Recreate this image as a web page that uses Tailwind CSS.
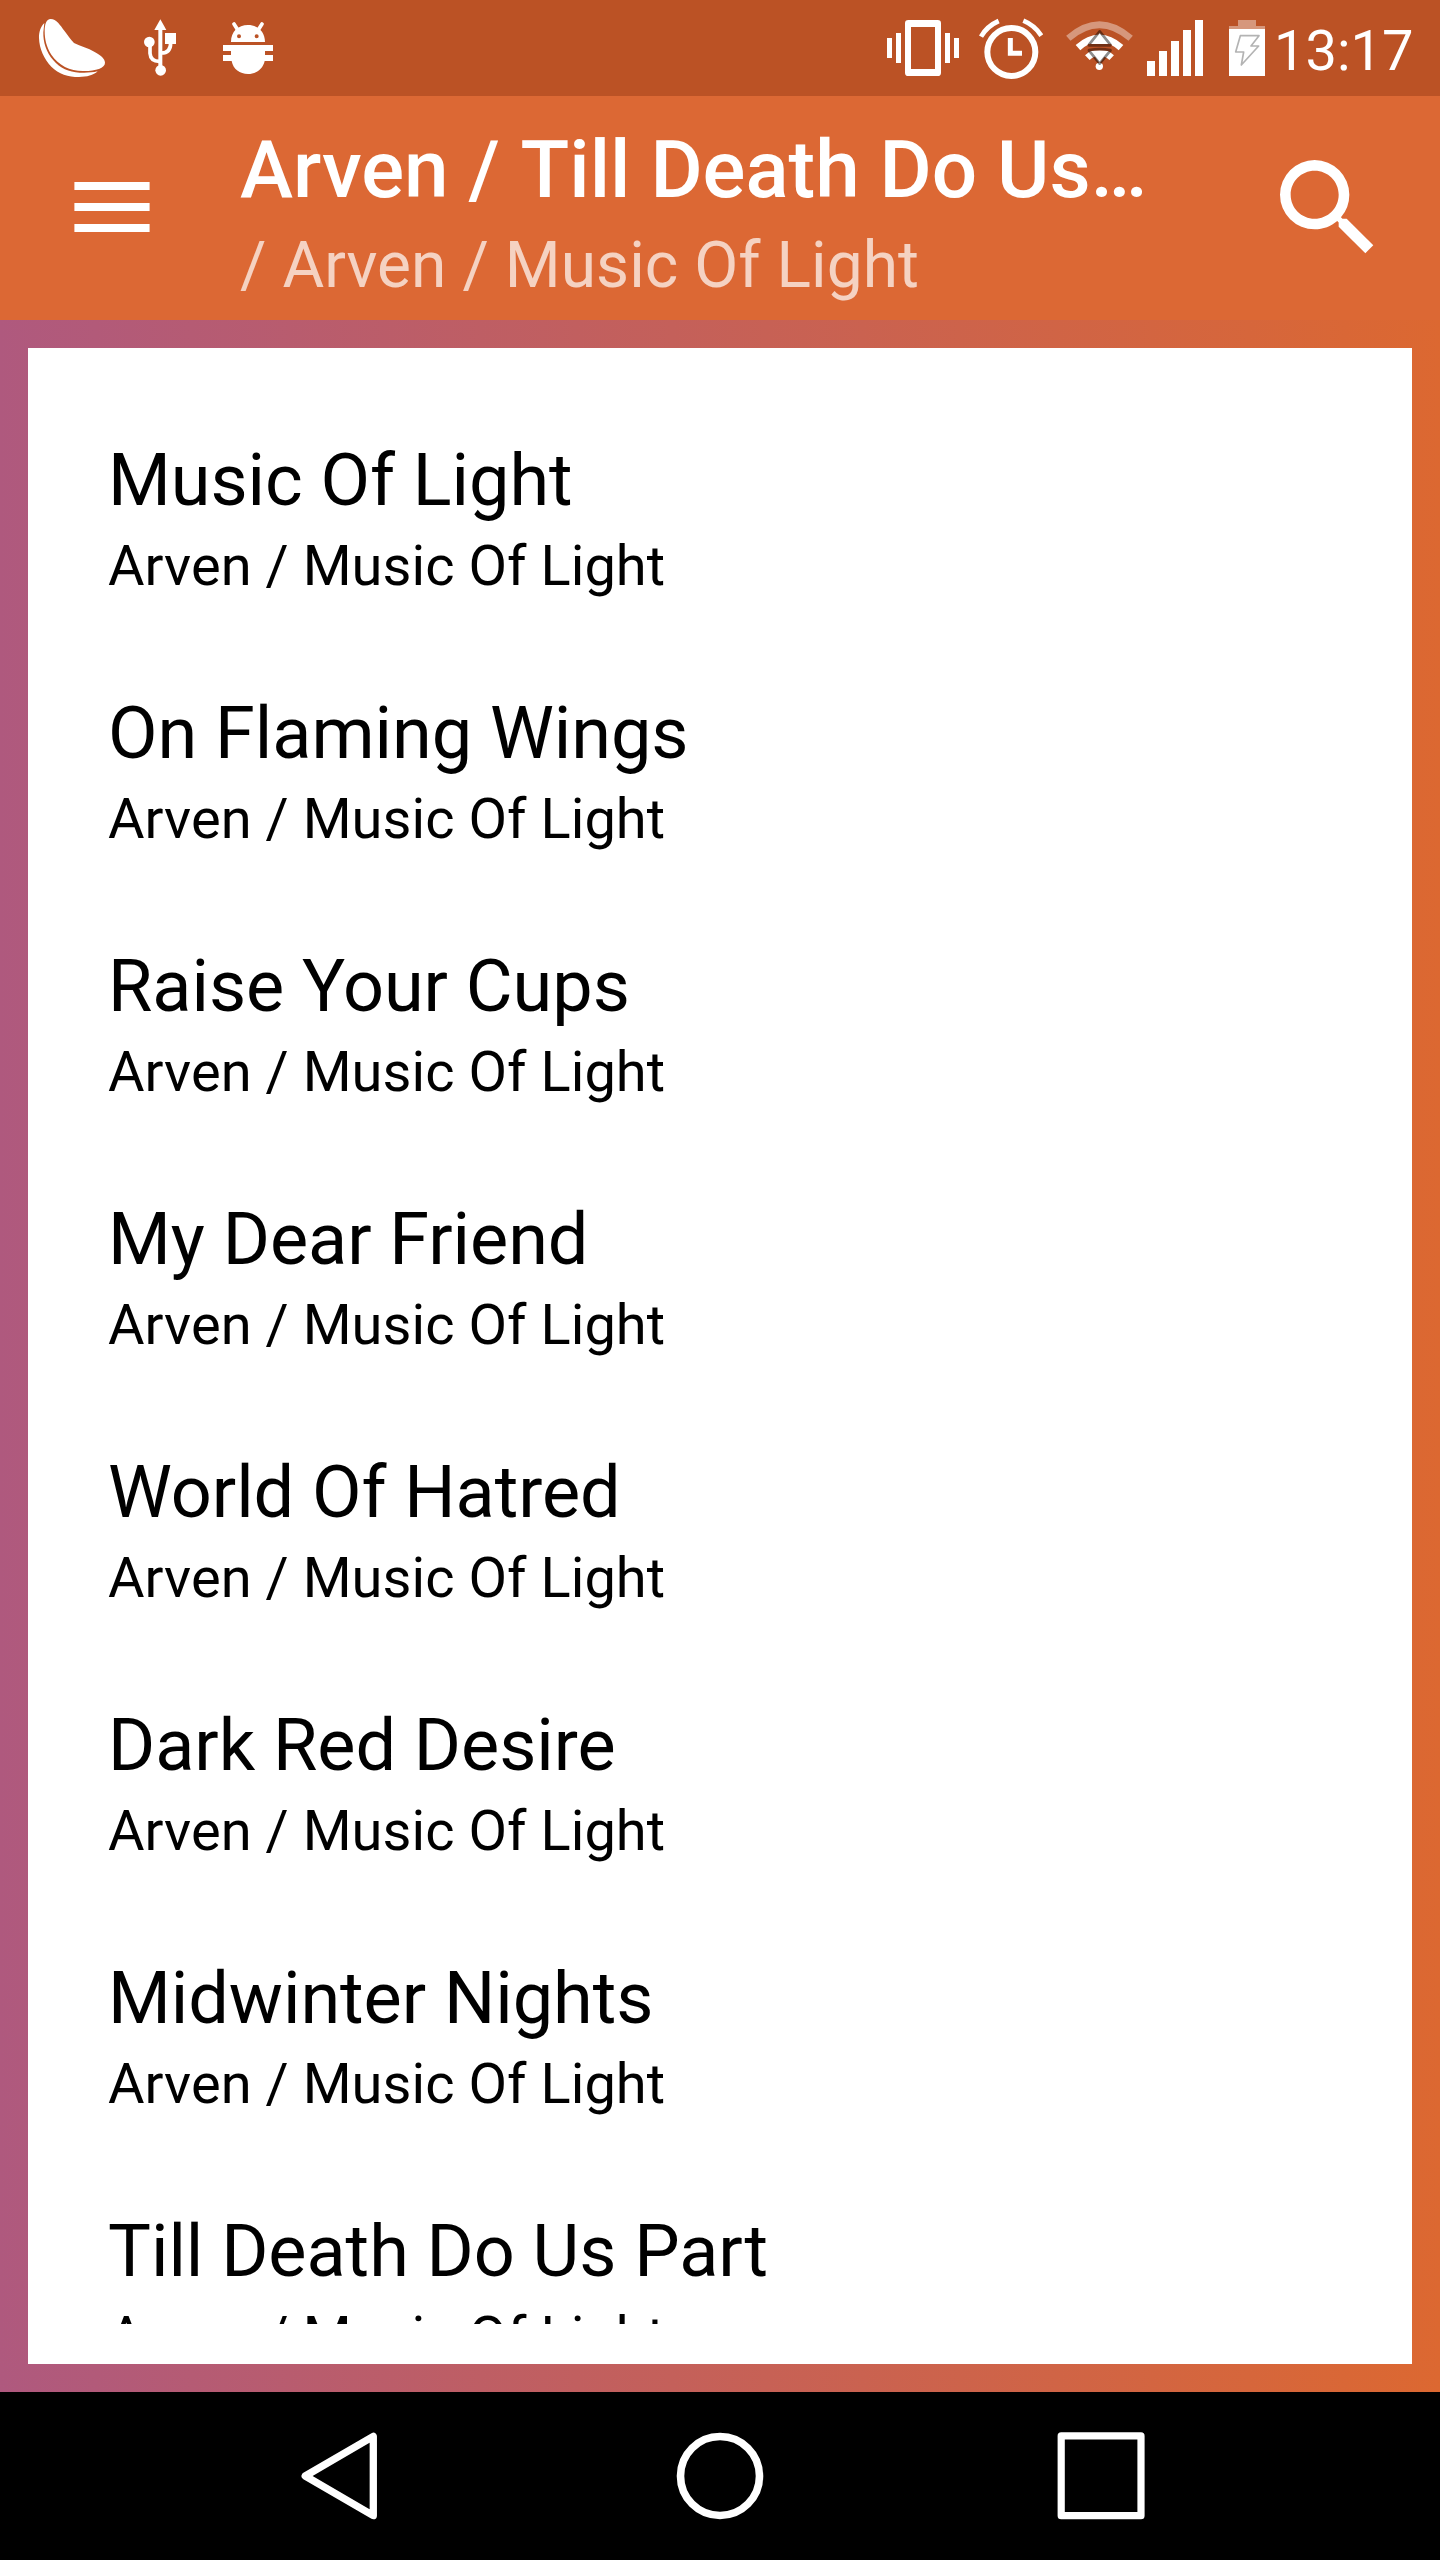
<!DOCTYPE html>
<html lang="en">
<head>
    <meta charset="UTF-8">
    <meta name="viewport" content="width=device-width, initial-scale=1.0">
    <title>Arven / Music Of Light</title>
    <script src="https://cdn.jsdelivr.net/npm/@tailwindcss/browser@4"></script>
</head>
<body class="bg-black">
  <div class="flex h-[2560px] w-[1440px] flex-col overflow-hidden font-['Roboto',sans-serif]">

    <!-- Status bar -->
    <div class="flex h-24 shrink-0 items-center bg-[#bb5225] pl-[38px] text-white">
      <svg class="h-24 w-[68px] shrink-0" viewBox="114 0 204 288" fill="currentColor">
        <path d="M152 57C169 57 181 76 193 92C203 105 212 118 222 129C242 139 264 144 284 156C302 166 315 176 315 188C315 204 288 213 252 213C212 214 176 197 154 164C139 141 134 117 134 94C134 73 139 57 152 57Z"/>
        <path d="M133 69C121 81 117 96 117 114C118 146 132 177 154 200C176 222 205 231 237 231C261 231 280 226 293 214C276 218 258 219 239 218C206 216 180 205 160 181C139 157 129 128 130 97Z"/>
      </svg>
      <svg class="ml-[37px] h-24 w-[34px] shrink-0" viewBox="429 0 102 288" fill="currentColor">
        <path d="M481 58L499 90H463Z"/>
        <path d="M475 86H487V205H475Z"/>
        <circle cx="448" cy="126" r="16"/>
        <circle cx="482" cy="211" r="16"/>
        <path d="M495 99H528V132H495Z"/>
        <path d="M450 132V160Q452 184 478 184M512 128Q512 159 484 159" fill="none" stroke="currentColor" stroke-width="11"/>
      </svg>
      <svg class="ml-[45px] h-24 w-[52px] shrink-0" viewBox="666 0 156 288" fill="currentColor">
        <path d="M702 72L712 88M786 72L776 88" stroke="currentColor" stroke-width="11" stroke-linecap="round"/>
        <path fill-rule="evenodd" d="M693 126C693 95 714 75 744 75C774 75 795 95 795 126ZM717 103a6 6 0 1 0 .1 12a6 6 0 1 0-.1-12ZM770 103a6 6 0 1 0 .1 12a6 6 0 1 0-.1-12Z"/>
        <path d="M669 135H819V153H795V165H819V183H794C789 207 768 222 744 222C720 222 699 207 695 183H669V165H693V153H669Z"/>
      </svg>

      <svg class="ml-auto h-24 w-[72px] shrink-0" viewBox="51 0 216 288" fill="currentColor">
        <path d="M51 114H66V174H51ZM78 99H93V189H78ZM225 99H240V189H225ZM252 114H267V174H252Z"/>
        <path fill-rule="evenodd" d="M115 60H203Q213 60 213 70V218Q213 228 203 228H115Q105 228 105 218V70Q105 60 115 60ZM123 81V207H195V81Z"/>
      </svg>
      <svg class="ml-5 h-24 w-16 shrink-0" viewBox="327 0 192 288" fill="none" stroke="currentColor">
        <circle cx="424" cy="156" r="72" stroke-width="18"/>
        <path d="M421 114V160H456" stroke-width="15"/>
        <path d="M333 110Q350 79 386 63M460 62Q494 76 514 107" stroke-width="14"/>
      </svg>
      <svg class="ml-[23px] h-24 w-[67px] shrink-0" viewBox="588 0 201 288" fill="none" stroke="currentColor">
        <path d="M595 115Q688 34 782 115" stroke-width="20" stroke-opacity="0.4"/>
        <path d="M624 143Q688 86 753 143" stroke-width="21"/>
        <path d="M652 173Q688 139 725 173" stroke-width="20"/>
        <circle cx="688" cy="199" r="11" fill="currentColor" stroke="none"/>
        <path d="M689 98L658 136H720Z" fill="currentColor" stroke="none"/>
        <path d="M689 190L658 148H720Z" fill="currentColor" stroke="none"/>
        <path d="M657 134L689 94L721 134M657 152L689 191L721 152" stroke="#000000" stroke-opacity="0.45" stroke-width="8" stroke-linecap="round" stroke-linejoin="round"/>
        <path d="M657 136H721M657 150Q689 145 721 150" stroke="#702f14" stroke-width="8" stroke-linecap="round"/>
      </svg>
      <svg class="ml-3.5 h-24 w-14 shrink-0" viewBox="51 0 168 288" fill="currentColor">
        <path d="M51 183H75V228H51ZM87 153H111V228H87ZM123 123H147V228H123ZM159 90H183V228H159ZM195 60H219V228H195Z"/>
      </svg>
      <svg class="ml-[26px] h-24 w-9 shrink-0" viewBox="297 0 108 288" fill="currentColor">
        <path d="M324 60H378V78H405V87H297V78H324Z" fill-opacity="0.4"/>
        <path d="M297 87H405V228H297Z"/>
        <path d="M331 107H387L363 138H386L334 195L341 156H317Z" fill="none" stroke="#b3b3b3" stroke-width="5" stroke-linejoin="round"/>
      </svg>
      <span class="ml-[9px] w-[138px] pt-1.5 mr-7 text-[56px] leading-[66px] whitespace-nowrap">13:17</span>
    </div>

    <!-- Toolbar -->
    <header class="flex h-56 shrink-0 items-center bg-[#dc6834] pl-[74px] pr-12 text-white">
      <svg class="mb-0.5 h-[50px] w-[76px] shrink-0" viewBox="0 0 76 50" fill="currentColor">
        <path d="M.4 0H75.6V8H.4ZM.4 21H75.6V29H.4ZM.4 42H75.6V50H.4Z"/>
      </svg>
      <div class="ml-[90px] flex flex-1 flex-col gap-[11px] pt-2.5 whitespace-nowrap">
        <h1 class="text-[80px] leading-[94px] font-medium">Arven / <span class="ml-px">Till Death Do Us…</span></h1>
        <p class="text-[64px] leading-[75px] tracking-[0.05px] text-white/70">/ Arven / Music Of Light</p>
      </div>
      <svg class="size-32 shrink-0" viewBox="0 0 24 24" fill="currentColor">
        <path d="M15.5 14h-.79l-.28-.27A6.471 6.471 0 0 0 16 9.5 6.5 6.5 0 1 0 9.5 16c1.61 0 3.09-.59 4.23-1.57l.27.28v.79l5 4.99L20.49 19l-4.99-5zm-6 0C7.01 14 5 11.99 5 9.5S7.01 5 9.5 5 14 7.01 14 9.5 11.99 14 9.5 14z"/>
      </svg>
    </header>

    <!-- Track list -->
    <main class="min-h-0 flex-1 bg-linear-to-r/srgb from-[#af597e] to-[#dc6831] p-7">
      <div class="h-full bg-white px-20 py-10">
        <ul id="tracks" class="h-full overflow-hidden text-black"></ul>
      </div>
    </main>

    <!-- Navigation bar -->
    <nav class="flex h-42 shrink-0 items-center bg-black pl-[300px] text-white">
      <svg class="h-[88px] w-[78px]" viewBox="0 0 78 88" fill="none" stroke="currentColor" stroke-width="7.3" stroke-linejoin="round">
        <path d="M5.2 44L73.3 4.3V83.7Z"/>
      </svg>
      <svg class="ml-[298px] size-[88px]" viewBox="0 0 88 88" fill="none" stroke="currentColor" stroke-width="7.6">
        <circle cx="44" cy="44" r="39.5"/>
      </svg>
      <svg class="ml-[293px] size-[88px]" viewBox="0 0 88 88" fill="none" stroke="currentColor" stroke-width="7.2" stroke-linejoin="round">
        <path d="M4.2 3.9H84V83.7H4.2Z"/>
      </svg>
    </nav>
  </div>

  <script>
    const album = 'Arven / Music Of Light';
    const tracks = [
      'Music Of Light',
      'On Flaming Wings',
      'Raise Your Cups',
      'My Dear Friend',
      'World Of Hatred',
      'Dark Red Desire',
      'Midwinter Nights',
      'Till Death Do Us Part'
    ];

    document.getElementById('tracks').innerHTML = tracks.map(title => `
      <li class="flex h-[253px] flex-col gap-[10px] pt-[51px]">
        <span class="text-[72px] leading-[84px] tracking-[-0.04px]">${title}</span>
        <span class="text-[56px] leading-[66px] tracking-[0.05px]">${album}</span>
      </li>
    `).join('');
  </script>
</body>
</html>
